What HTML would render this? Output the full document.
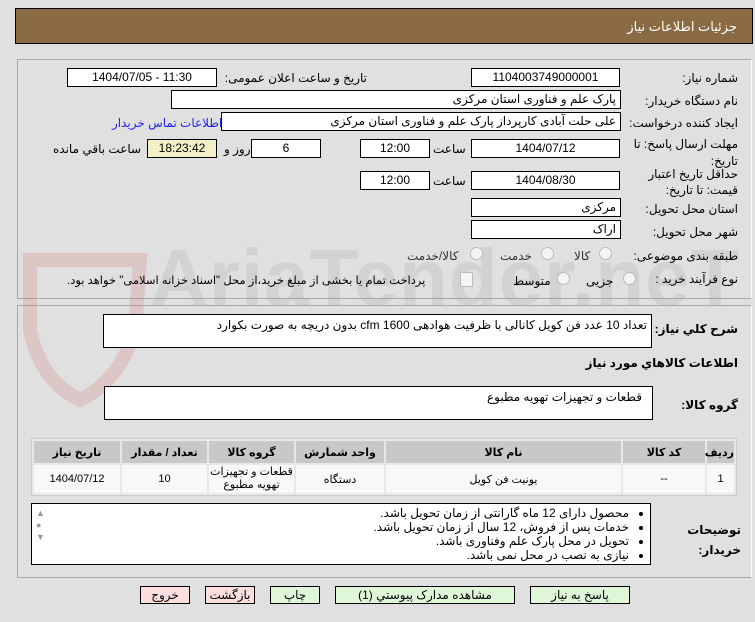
<!DOCTYPE html>
<html><head><meta charset="utf-8"><style>
body{margin:0;width:755px;height:622px;background:#e0e0e0;font-family:"Liberation Sans","DejaVu Sans",sans-serif;font-size:12px;color:#000;position:relative;overflow:hidden}
.a{position:absolute}
.hdr{left:15px;top:8px;width:736px;height:34px;background:#8b6b43;border:1px solid #000}
.hdr span{position:absolute;right:15px;top:10px;color:#fff;font-size:13px}
.pan{border:1px solid #a8a8a8;border-right-color:#fff;border-bottom-color:#a8a8a8}
.f{position:absolute;background:#fff;border:1px solid #000;box-sizing:border-box;height:19px;line-height:17px;text-align:center;font-size:12px;white-space:nowrap;overflow:hidden}
.r{text-align:right;padding-right:4px;direction:rtl}
.l{position:absolute;direction:rtl;white-space:nowrap;font-size:12px;line-height:14px}
.rad{position:absolute;width:11px;height:11px;border-radius:50%;border:1px solid #bbb;background:#f4f4f4}
table{border-collapse:separate;border-spacing:2px;background:#e8e8e8;table-layout:fixed}
td{text-align:center;font-size:11px;background:#f8f8f8;padding:0}
th{background:#c8c8c8;height:22px;font-size:11px;padding:0}
.btn{position:absolute;top:586px;height:18px;border:1px solid #000;box-sizing:border-box;background:#dff7d8;text-align:center;line-height:17px;font-size:12px}
.wm{position:absolute;font-size:80px;font-weight:bold;color:rgba(160,160,160,.22);left:150px;top:232px;letter-spacing:1px;font-family:"Liberation Sans",sans-serif}
</style></head><body>
<div class="a hdr"><span>جزئیات اطلاعات نیاز</span></div>
<div class="a pan" style="left:17px;top:59px;width:733px;height:238px"></div>
<div class="a pan" style="left:17px;top:305px;width:733px;height:271px"></div>
<div class="wm">AriaTender.neT</div>
<svg class="a" style="left:20px;top:250px" width="130" height="170"><path d="M10 10 L120 10 L115 80 Q100 130 60 150 Q20 130 10 80 Z" fill="none" stroke="rgba(210,120,120,.25)" stroke-width="14"/></svg>

<div class="l" style="right:17px;top:71px">شماره نیاز:</div>
<div class="f" style="left:471px;top:68px;width:149px">1104003749000001</div>
<div class="l" style="right:388px;top:71px">تاریخ و ساعت اعلان عمومی:</div>
<div class="f" style="left:67px;top:68px;width:150px">1404/07/05 - 11:30</div>

<div class="l" style="right:17px;top:94px">نام دستگاه خریدار:</div>
<div class="f r" style="left:171px;top:90px;width:450px">پارک علم و فناوری استان مرکزی</div>

<div class="l" style="right:17px;top:116px">ایجاد کننده درخواست:</div>
<div class="f r" style="left:221px;top:112px;width:400px">علی حلت آبادی کارپرداز پارک علم و فناوری استان مرکزی</div>
<div class="l" style="left:112px;top:116px;color:#2222ee">اطلاعات تماس خریدار</div>

<div class="l" style="right:17px;top:137px">مهلت ارسال پاسخ: تا</div>
<div class="l" style="right:17px;top:154px">تاریخ:</div>
<div class="f" style="left:471px;top:139px;width:149px">1404/07/12</div>
<div class="l" style="left:433px;top:142px">ساعت</div>
<div class="f" style="left:360px;top:139px;width:70px">12:00</div>
<div class="f" style="left:251px;top:139px;width:70px">6</div>
<div class="l" style="left:224px;top:142px">روز و</div>
<div class="f" style="left:147px;top:139px;width:70px;background:#f3f0c8">18:23:42</div>
<div class="l" style="left:53px;top:142px">ساعت باقي مانده</div>

<div class="l" style="right:17px;top:167px">حداقل تاریخ اعتبار</div>
<div class="l" style="right:17px;top:183px">قیمت: تا تاریخ:</div>
<div class="f" style="left:471px;top:171px;width:149px">1404/08/30</div>
<div class="l" style="left:433px;top:174px">ساعت</div>
<div class="f" style="left:360px;top:171px;width:70px">12:00</div>

<div class="l" style="right:17px;top:202px">استان محل تحویل:</div>
<div class="f r" style="left:471px;top:198px;width:150px">مرکزی</div>
<div class="l" style="right:17px;top:225px">شهر محل تحویل:</div>
<div class="f r" style="left:471px;top:220px;width:150px">اراک</div>

<div class="l" style="right:17px;top:249px">طبقه بندی موضوعی:</div>
<div class="rad" style="left:599px;top:247px"></div><div class="l" style="left:574px;top:249px;color:#333">کالا</div>
<div class="rad" style="left:541px;top:247px"></div><div class="l" style="left:500px;top:249px;color:#333">خدمت</div>
<div class="rad" style="left:470px;top:247px"></div><div class="l" style="left:407px;top:249px;color:#333">کالا/خدمت</div>

<div class="l" style="right:17px;top:272px">نوع فرآیند خرید :</div>
<div class="rad" style="left:623px;top:272px"></div><div class="l" style="left:586px;top:274px">جزیی</div>
<div class="rad" style="left:557px;top:272px"></div><div class="l" style="left:513px;top:274px">متوسط</div>
<div class="a" style="left:460px;top:272px;width:11px;height:13px;border:1px solid #bbb;background:#f4f4f4"></div>
<div class="l" style="left:67px;top:274px;font-size:11.5px">پرداخت تمام یا بخشی از مبلغ خرید،از محل "اسناد خزانه اسلامی" خواهد بود.</div>

<div class="l" style="right:17px;top:322px;font-weight:bold">شرح کلي نياز:</div>
<div class="f r" style="left:103px;top:314px;width:549px;height:34px;text-align:right;line-height:20px;background:#fff">تعداد 10 عدد فن کویل کانالی با ظرفیت هوادهی cfm 1600 بدون دریچه به صورت بکوارد</div>
<div class="l" style="right:17px;top:356px;font-weight:bold">اطلاعات کالاهاي مورد نياز</div>
<div class="l" style="right:17px;top:398px;font-weight:bold">گروه کالا:</div>
<div class="f r" style="left:104px;top:386px;width:549px;height:34px;text-align:right;line-height:20px;padding-right:10px">قطعات و تجهیزات تهویه مطبوع</div>

<table class="a" style="left:31px;top:438px;width:706px;height:57px;direction:rtl;border:1px solid #ccc">
<colgroup><col style="width:27px"><col style="width:82px"><col style="width:235px"><col style="width:88px"><col style="width:85px"><col style="width:85px"><col></colgroup>
<tr><th>ردیف</th><th>کد کالا</th><th>نام کالا</th><th>واحد شمارش</th><th>گروه کالا</th><th>تعداد / مقدار</th><th>تاریخ نیاز</th></tr>
<tr style="height:28px"><td>1</td><td>--</td><td>یونیت فن کویل</td><td>دستگاه</td><td style="line-height:13px">قطعات و تجهیزات<br>تهویه مطبوع</td><td>10</td><td>1404/07/12</td></tr>
</table>

<div class="l" style="right:14px;top:523px;font-weight:bold">توضیحات</div>
<div class="l" style="right:14px;top:543px;font-weight:bold">خریدار:</div>
<div class="a" style="left:31px;top:503px;width:620px;height:62px;background:#fff;border:1px solid #000;box-sizing:border-box"></div>
<div class="a" style="left:36px;top:507px;color:#999;font-size:9px;line-height:12px">▲<br>●<br>▼</div>
<ul class="a" style="right:104px;top:506px;margin:0;padding-right:22px;direction:rtl;font-size:12px;line-height:14px">
<li>محصول دارای 12 ماه گارانتی از زمان تحویل باشد.</li>
<li>خدمات پس از فروش، 12 سال از زمان تحویل باشد.</li>
<li>تحویل در محل پارک علم وفناوری باشد.</li>
<li>نیازی به نصب در محل نمی باشد.</li></ul>

<div class="btn" style="left:530px;width:100px">پاسخ به نیاز</div>
<div class="btn" style="left:335px;width:180px">مشاهده مدارک پیوستي (1)</div>
<div class="btn" style="left:270px;width:50px">چاپ</div>
<div class="btn" style="left:205px;width:50px;background:#fddede">بازگشت</div>
<div class="btn" style="left:140px;width:50px;background:#fddede">خروج</div>
</body></html>
